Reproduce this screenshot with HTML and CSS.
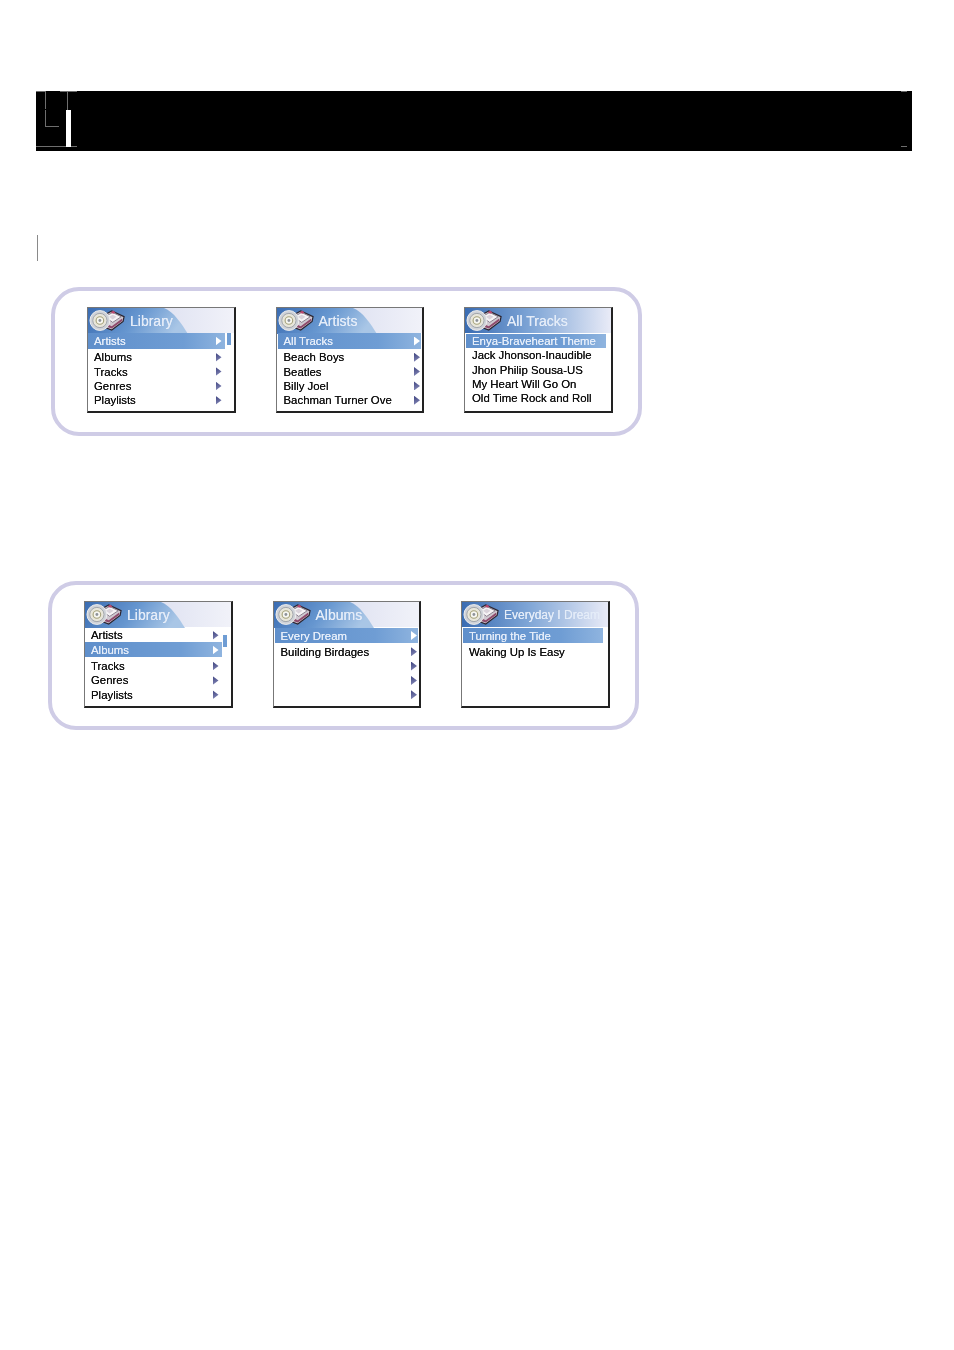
FILE: index.html
```html
<!DOCTYPE html>
<html lang="en">
<head>
    <meta charset="UTF-8">
    <meta name="viewport" content="width=device-width, initial-scale=1.0">
    <title>Library menus</title>
    <link rel="stylesheet" href="styles.css">
</head>
<body>

<svg class="defs" width="0" height="0" aria-hidden="true">
    <defs>
        <linearGradient id="tabFill" x1="0" y1="0" x2="1" y2="0.2">
            <stop offset="0" stop-color="#3a6cb2"/>
            <stop offset="0.55" stop-color="#6797d0"/>
            <stop offset="1" stop-color="#a9c6e6"/>
        </linearGradient>
        <symbol id="tab" viewBox="0 0 100 26" preserveAspectRatio="none">
            <path d="M0 0H76C86 4 93 15 100 26H0Z" fill="url(#tabFill)"/>
        </symbol>
        <symbol id="disc" viewBox="0 0 38 24">
            <path d="M13 8 24 2 37 8 36 13 24 22 13 18Z" fill="#cfc8d0" stroke="#2c2530" stroke-width="1.300"/>
            <path d="M17 15 24 18 35 10 35 12.500 24 20.500 17 18Z" fill="#8f4a6c"/>
            <path d="M17 8 25 3.500 34 8 25 14Z" fill="#f6f3f5" stroke="#6f6476" stroke-width=".8"/>
            <path d="M21 8 25 6 29 8 25 11Z" fill="#d9d2da"/>
            <path d="M23 3.500 25.500 1.500 28 3.500 25.500 5Z" fill="#b8486e"/>
            <circle cx="11.500" cy="12" r="10.500" fill="#cfd2d8" stroke="#efefef"/>
            <circle cx="11.500" cy="12" r="7.500" fill="#e8e6da" stroke="#8f949c" stroke-width=".8"/>
            <circle cx="11.500" cy="12" r="4" fill="#f7f7f2" stroke="#a6a27a" stroke-width="1.200"/>
            <circle cx="11.500" cy="12" r="1.500" fill="#8d929a"/>
        </symbol>
    </defs>
</svg>

<header class="banner">
    <span class="mark mark-top-left"></span>
    <span class="mark mark-top-mid"></span>
    <span class="mark mark-stem"></span>
    <span class="mark mark-elbow"></span>
    <span class="mark mark-elbow-foot"></span>
    <span class="mark mark-drop"></span>
    <span class="mark mark-bottom-left"></span>
    <span class="mark mark-top-right"></span>
    <span class="mark mark-bottom-right"></span>
    <span class="banner-bar"></span>
</header>

<div class="side-rule"></div>

<section class="panel panel-first">
    <div class="screen">
        <div class="screen-head">
            <svg class="tab"><use href="#tab"/></svg>
            <svg class="disc"><use href="#disc"/></svg>
            <span class="title">Library</span>
        </div>
        <div class="list has-scroll">
            <div class="row selected spaced"><span>Artists</span><i class="arrow"></i></div>
            <div class="row"><span>Albums</span><i class="arrow"></i></div>
            <div class="row"><span>Tracks</span><i class="arrow"></i></div>
            <div class="row"><span>Genres</span><i class="arrow"></i></div>
            <div class="row"><span>Playlists</span><i class="arrow"></i></div>
            <b class="scroll-thumb"></b>
        </div>
    </div>

    <div class="screen">
        <div class="screen-head">
            <svg class="tab"><use href="#tab"/></svg>
            <svg class="disc"><use href="#disc"/></svg>
            <span class="title">Artists</span>
        </div>
        <div class="list">
            <div class="row selected spaced"><span>All Tracks</span><i class="arrow"></i></div>
            <div class="row"><span>Beach Boys</span><i class="arrow"></i></div>
            <div class="row"><span>Beatles</span><i class="arrow"></i></div>
            <div class="row"><span>Billy Joel</span><i class="arrow"></i></div>
            <div class="row"><span>Bachman Turner Ove</span><i class="arrow"></i></div>
        </div>
    </div>

    <div class="screen">
        <div class="screen-head head-wide">
            <svg class="disc"><use href="#disc"/></svg>
            <span class="title">All Tracks</span>
        </div>
        <div class="list tracks">
            <div class="row selected"><span>Enya-Braveheart Theme</span></div>
            <div class="row"><span>Jack Jhonson-Inaudible</span></div>
            <div class="row"><span>Jhon Philip Sousa-US</span></div>
            <div class="row"><span>My Heart Will Go On</span></div>
            <div class="row"><span>Old Time Rock and Roll</span></div>
        </div>
    </div>
</section>

<section class="panel panel-second">
    <div class="screen">
        <div class="screen-head">
            <svg class="tab"><use href="#tab"/></svg>
            <svg class="disc"><use href="#disc"/></svg>
            <span class="title">Library</span>
        </div>
        <div class="list has-scroll">
            <div class="row"><span>Artists</span><i class="arrow"></i></div>
            <div class="row selected spaced"><span>Albums</span><i class="arrow"></i></div>
            <div class="row"><span>Tracks</span><i class="arrow"></i></div>
            <div class="row"><span>Genres</span><i class="arrow"></i></div>
            <div class="row"><span>Playlists</span><i class="arrow"></i></div>
            <b class="scroll-thumb"></b>
        </div>
    </div>

    <div class="screen">
        <div class="screen-head">
            <svg class="tab"><use href="#tab"/></svg>
            <svg class="disc"><use href="#disc"/></svg>
            <span class="title">Albums</span>
        </div>
        <div class="list">
            <div class="row selected spaced"><span>Every Dream</span><i class="arrow"></i></div>
            <div class="row"><span>Building Birdages</span><i class="arrow"></i></div>
            <div class="row"><span></span><i class="arrow"></i></div>
            <div class="row"><span></span><i class="arrow"></i></div>
            <div class="row"><span></span><i class="arrow"></i></div>
        </div>
    </div>

    <div class="screen">
        <div class="screen-head head-wide">
            <svg class="disc"><use href="#disc"/></svg>
            <span class="title title-small">Everyday I Dream</span>
        </div>
        <div class="list tracks">
            <div class="row selected spaced"><span>Turning the Tide</span></div>
            <div class="row"><span>Waking Up Is Easy</span></div>
        </div>
    </div>
</section>

</body>
</html>
```

FILE: styles.css
```css
body {
    font-family: "Liberation Sans", Arial, sans-serif;
    background-color: #fff;
    color: #111;
    margin: 0;
    padding: 91px 0 0;
}
.defs {
    display: block;
    height: 0;
}

/* black title band */
.banner {
    position: relative;
    height: 60px;
    width: 876px;
    margin-left: 36px;
    background-color: #000;
}
.banner-bar {
    position: absolute;
    left: 30px;
    top: 19px;
    width: 5px;
    height: 37px;
    background-color: #fff;
}
.mark {
    position: absolute;
    background-color: #6e6e6e;
}
.mark-top-left { left: 0; top: 0; width: 10px; height: 1px; }
.mark-top-mid { left: 24px; top: 0; width: 17px; height: 1px; }
.mark-stem { left: 9px; top: 0; width: 1px; height: 18px; }
.mark-elbow { left: 9px; top: 19px; width: 1px; height: 16px; }
.mark-elbow-foot { left: 9px; top: 35px; width: 14px; height: 1px; }
.mark-drop { left: 31px; top: 0; width: 1px; height: 19px; }
.mark-bottom-left { left: 0; top: 55px; width: 41px; height: 1px; }
.mark-top-right { right: 5px; top: 0; width: 6px; height: 1px; }
.mark-bottom-right { right: 5px; top: 55px; width: 6px; height: 1px; }

.side-rule {
    width: 1px;
    height: 26px;
    margin: 84px 0 0 37px;
    background-color: #8a8a8a;
}

/* rounded lilac frames */
.panel {
    display: flex;
    gap: 40px;
    box-sizing: border-box;
    width: 591px;
    height: 149px;
    padding: 16px 0 0 32px;
    border: 4px solid #cfcce6;
    border-radius: 28px;
}
.panel-first {
    margin: 26px 0 0 51px;
}
.panel-second {
    margin: 145px 0 0 48px;
}

/* device screen */
.screen {
    width: 148.500px;
    height: 107px;
    box-sizing: border-box;
    border-top: 1px solid #777;
    border-left: 1px solid #777;
    border-right: 2px solid #222;
    border-bottom: 2px solid #222;
    background-color: #fff;
    filter: blur(0.35px);
}
.panel-first .screen {
    height: 106px;
}
.screen-head {
    position: relative;
    display: flex;
    align-items: center;
    height: 25px;
    background: linear-gradient(90deg, #cdd2ea 0%, #f1f2f9 100%);
}
.head-wide {
    background: linear-gradient(90deg, #3a6cb2 0%, #7ea5d6 45%, #e9ebf7 100%);
}
.tab {
    position: absolute;
    left: 0;
    top: 0;
    width: 100px;
    height: 26px;
}
.disc {
    position: relative;
    flex: none;
    width: 36px;
    height: 23px;
    margin: 0 5px 0 1px;
}
.title {
    position: relative;
    font-size: 14px;
    color: #e4ecf8;
    text-shadow: 0 0 0.6px #e4ecf8;
    white-space: nowrap;
}
.title-small {
    font-size: 12px;
}

/* menu rows */
.list {
    position: relative;
    padding: 0 1px;
}
.panel-second .list,
.tracks {
    padding-top: 1px;
}
.has-scroll {
    padding-left: 0;
    padding-right: 9px;
}
.tracks {
    padding-left: 1px;
    padding-right: 5px;
}
.row {
    display: flex;
    align-items: center;
    justify-content: space-between;
    height: 14.400px;
    padding: 0 1px 0 6px;
    font-size: 11.400px;
    line-height: 14px;
    white-space: nowrap;
    text-shadow: 0 0 0.4px #111;
}
.has-scroll .row {
    padding-right: 3px;
}
.selected {
    background: linear-gradient(90deg, #5f8fcb 0%, #6f9dd4 70%, #8fb4df 100%);
    color: #e6eefa;
    text-shadow: 0 0 0.6px #e6eefa;
}
.row.spaced {
    height: 16px;
    margin-bottom: 1px;
}
.tracks .selected {
    height: 14px;
}
.panel-second .row.selected {
    height: 15px;
    margin-bottom: 1.500px;
}
.arrow {
    flex: none;
    width: 6px;
    height: 9px;
    background: linear-gradient(160deg, #3f4480 0%, #8c90bd 100%);
    clip-path: polygon(0 0, 100% 50%, 0 100%);
}
.selected .arrow {
    background: #fff;
}
.scroll-thumb {
    position: absolute;
    right: 3px;
    top: 0;
    width: 4px;
    height: 12px;
    background-color: #6f9dd4;
}
.panel-second .scroll-thumb {
    right: 4px;
    top: 8px;
}
```
